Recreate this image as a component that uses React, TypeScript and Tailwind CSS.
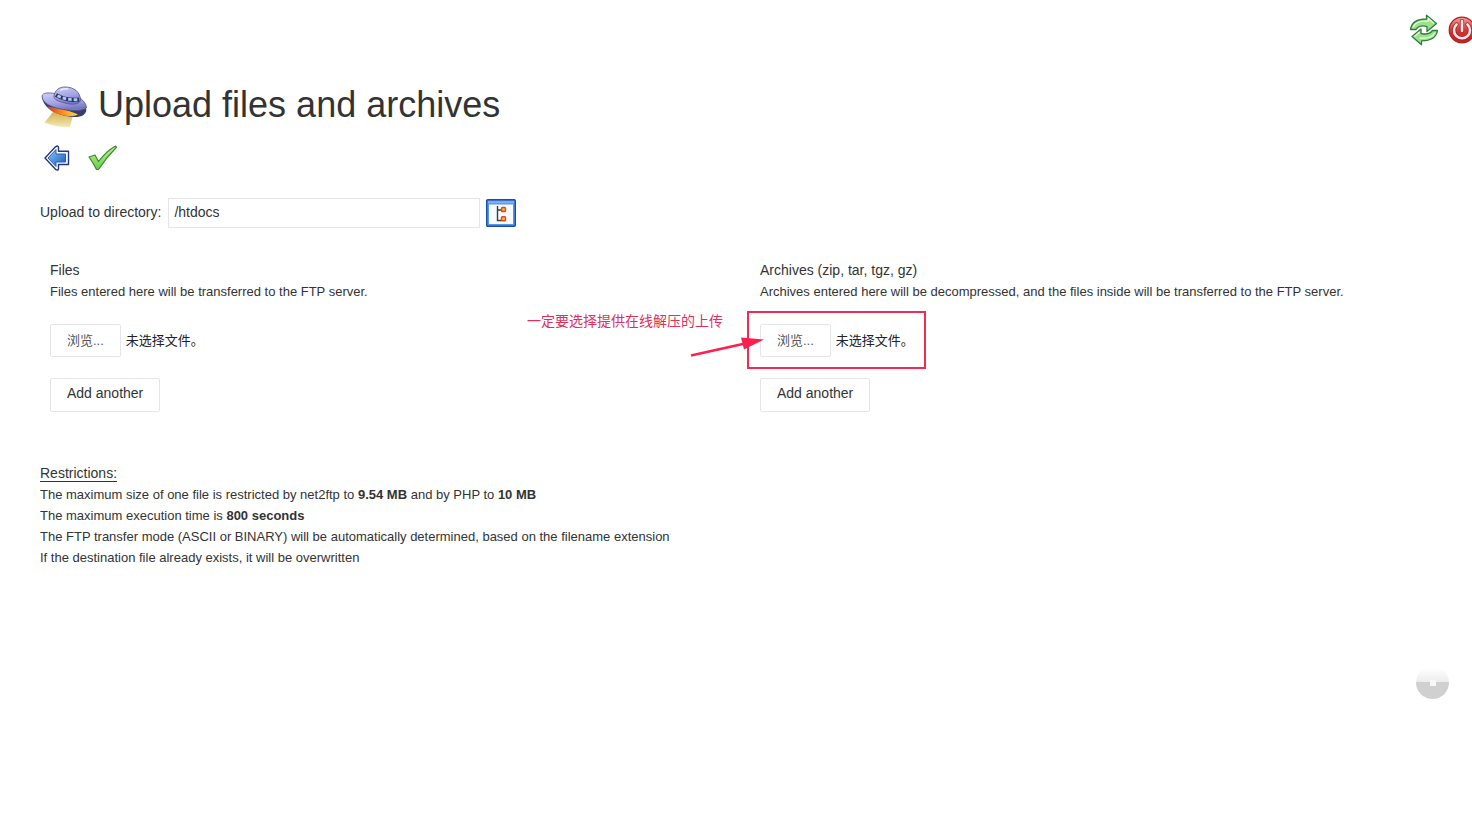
import { useId, useState } from "react";
import type { ReactNode } from "react";

type Section = { title: string; hint: string; marked?: boolean };

const SECTIONS: Section[] = [
  { title: "Files", hint: "Files entered here will be transferred to the FTP server." },
  {
    title: "Archives (zip, tar, tgz, gz)",
    hint: "Archives entered here will be decompressed, and the files inside will be transferred to the FTP server.",
    marked: true,
  },
];

function RefreshIcon() {
  return (
    <svg viewBox="0 0 32 32" className="size-8" aria-hidden="true">
      <g stroke="#2f7d3a" strokeWidth="1.3" strokeLinejoin="round" fill="#9be288">
        <path d="M2.500 15.500C3.500 8.500 8 5 18.500 5V1.200L28.500 9.500l-9.500 8V12.500C14 11 10.500 11.500 8 15.500z" />
        <path d="M29.500 16.500C28.500 23.500 24 26.800 13.500 26.800v4L4 22.500l9-7.500v4.500c5 1.200 8.500 1 11.500-3z" />
      </g>
      <g fill="none" stroke="#e2fbd8" strokeWidth="1.3">
        <path d="M5 13.500C7 8.500 11 7 20.500 7.200V4.500l5.500 5" />
        <path d="M27 18.500C25 23 21 24.500 11.500 24.200M6.500 22.500l5-4.500" />
      </g>
    </svg>
  );
}

function PowerIcon() {
  return (
    <svg viewBox="0 0 32 32" className="size-8" aria-hidden="true">
      <defs>
        <linearGradient id="power-red" x1="0" y1="0" x2="0" y2="1">
          <stop offset="0" stopColor="#f0a09c" />
          <stop offset="0.5" stopColor="#d63838" />
          <stop offset="1" stopColor="#c42024" />
        </linearGradient>
      </defs>
      <circle cx="16" cy="16" r="12.800" fill="url(#power-red)" stroke="#a82022" strokeWidth="1.2" />
      <g fill="none" strokeLinecap="round">
        <path d="M10.500 10.500a8 8 0 1 0 11 0M16 7v10" stroke="#b02022" strokeWidth="4.200" />
        <path d="M10.500 10.500a8 8 0 1 0 11 0M16 7v10" stroke="#fbeaea" strokeWidth="2.600" />
      </g>
    </svg>
  );
}

function UfoIcon() {
  return (
    <svg viewBox="0 0 48 44" className="h-11 w-12 shrink-0" aria-hidden="true">
      <defs>
        <linearGradient id="ufo-hull" x1="0" y1="0" x2="0.3" y2="1">
          <stop offset="0" stopColor="#cfcff6" />
          <stop offset="0.6" stopColor="#a4a4e6" />
          <stop offset="1" stopColor="#7878c0" />
        </linearGradient>
        <linearGradient id="ufo-beam" x1="0" y1="0" x2="0" y2="1">
          <stop offset="0" stopColor="#d4b04c" />
          <stop offset="1" stopColor="#f2e8b8" />
        </linearGradient>
        <linearGradient id="ufo-glow" x1="0" y1="0" x2="1" y2="0">
          <stop offset="0" stopColor="#b8402c" />
          <stop offset="0.5" stopColor="#ff8c1c" />
          <stop offset="1" stopColor="#ffd84a" />
        </linearGradient>
      </defs>
      <path d="M13 28L4.500 38.500q12 5 25.500 4.500L33 31z" fill="url(#ufo-beam)" />
      <path d="M2 12C2 19 8 26.500 20 30.500c9 3 19 3.500 23.500.5 3-2.500 3.500-5 2-8z" fill="#3c3c68" />
      <path d="M7 22.500c8 1 20 3 31 8-4 2.200-11 2-17 .2C14 29 10 26.500 7 22.500z" fill="url(#ufo-glow)" />
      <path
        d="M2 12C3 8.500 8 8.500 15 9.500l25 4.500c4 3 6.500 6.500 6.500 10-3 2.500-12 3.500-23 1.500C11 23.500 2 19 2 12z"
        fill="url(#ufo-hull)"
        stroke="#50508c"
        strokeWidth="0.8"
      />
      <path
        d="M14 12C15 6.500 18.500 3 25 3c9 0 15.500 5 15.500 13.500-1.500 4-8.500 4.500-15.500 2.500-6.500-1.600-11.500-3.500-11-7z"
        fill="url(#ufo-hull)"
        stroke="#50508c"
        strokeWidth="0.8"
      />
      <path d="M16 11c6 3.500 15 5.500 23 4.500" fill="none" stroke="#30305c" strokeWidth="4.200" />
      <path d="M17.500 11.800c6 3 13 4.200 20.500 3.900" fill="none" stroke="#a4ccff" strokeWidth="2.800" strokeDasharray="3.600 2" />
      <path d="M20 6.500c2-1.500 5-2 8-1.500" fill="none" stroke="#ececff" strokeWidth="1.500" />
    </svg>
  );
}

function BackIcon() {
  return (
    <svg viewBox="0 0 32 32" className="size-8" aria-hidden="true">
      <defs>
        <linearGradient id="back-blue" x1="0" y1="0" x2="1" y2="1">
          <stop offset="0" stopColor="#8cc8fa" />
          <stop offset="1" stopColor="#1458bc" />
        </linearGradient>
      </defs>
      <path
        d="M5 16L15.500 4.800q3-2 3 1V9.200H28.500v13.300H18.500v4q0 2.500-3 .8z"
        fill="#fff"
        stroke="#26387c"
        strokeWidth="1.400"
        strokeLinejoin="round"
      />
      <path
        d="M8 16l8-8.500V12h9.500v8H16v4.500z"
        fill="url(#back-blue)"
        stroke="#2460b4"
        strokeWidth="1"
        strokeLinejoin="round"
      />
    </svg>
  );
}

function CheckIcon() {
  return (
    <svg viewBox="0 0 32 32" className="size-8" aria-hidden="true">
      <defs>
        <linearGradient id="check-green" x1="0" y1="0" x2="0" y2="1">
          <stop offset="0" stopColor="#c4f598" />
          <stop offset="1" stopColor="#68cc44" />
        </linearGradient>
      </defs>
      <path
        d="M3 15l6-2 3.500 6.500Q20 9.500 29.500 4l1 1.200Q20.500 15 12.500 27.500H10.500Q7 20.500 3 15z"
        fill="url(#check-green)"
        stroke="#3c8a34"
        strokeWidth="1.200"
        strokeLinejoin="round"
      />
    </svg>
  );
}

function TreeIcon() {
  return (
    <svg viewBox="0 0 30 28" className="h-7 w-[30px]" aria-hidden="true">
      <rect x="0.700" y="0.700" width="28.600" height="26.600" rx="1" fill="#5a96e8" stroke="#1c4ba8" strokeWidth="1.400" />
      <path d="M2 3.200h26" stroke="#7db0f4" strokeWidth="2" />
      <path d="M3 5.500h24V25H3z" fill="#f6f9ff" />
      <path d="M11.500 7v14.500h4M11.500 11h4" fill="none" stroke="#3c3c3c" strokeWidth="1.400" />
      <g fill="#ffb03c" stroke="#dc4a1c" strokeWidth="1.400">
        <rect x="15.500" y="8.500" width="4" height="4" rx="0.800" />
        <rect x="15.500" y="17.800" width="4" height="4" rx="0.800" />
      </g>
    </svg>
  );
}

function IconButton({ label, children }: { label: string; children: ReactNode }) {
  return (
    <button type="button" aria-label={label} className="block shrink-0 cursor-pointer">
      {children}
    </button>
  );
}

function FileRow({ marked }: { marked?: boolean }) {
  const id = useId();
  const [name, setName] = useState("");

  return (
    <div className="relative mb-[21px] flex w-fit items-center text-[13px]">
      <input
        id={id}
        type="file"
        className="peer sr-only"
        onChange={(e) => setName(e.target.files?.[0]?.name ?? "")}
      />
      <label
        htmlFor={id}
        className="cursor-pointer rounded-xs border border-[#e5e5e5] px-4 py-[5px] text-[#555] peer-focus-visible:border-[#999]"
      >
        浏览...
      </label>
      <span className="ml-[5px] text-[#222]">{name || "未选择文件。"}</span>
      {marked && <Callout />}
    </div>
  );
}

// Red frame, arrow and note drawn over the archive picker
function Callout() {
  return (
    <div className="pointer-events-none absolute -top-[13px] -right-3 -bottom-3 -left-[13px] border-2 border-[#f02c54]">
      <p className="absolute -top-0.5 right-full mr-[26px] whitespace-nowrap text-[14px] text-[#e0305a]">
        一定要选择提供在线解压的上传
      </p>
      <svg viewBox="0 0 76 22" className="absolute top-6 -left-[59px] h-[22px] w-[76px]" aria-hidden="true">
        <path d="M1 18.500l54-12" stroke="#ff1f4f" strokeWidth="2.400" />
        <path d="M51 .500L74 2.500 54 12.500z" fill="#ff1f4f" />
      </svg>
    </div>
  );
}

function UploadSection({ title, hint, marked }: Section) {
  const [rows, setRows] = useState(1);

  return (
    <section className="p-2.5">
      <h2>{title}</h2>
      <p className="mb-[22px] text-[13px]">{hint}</p>
      {Array.from({ length: rows }, (_, i) => (
        <FileRow key={i} marked={marked && i === 0} />
      ))}
      <button
        type="button"
        onClick={() => setRows(rows + 1)}
        className="cursor-pointer rounded-xs border border-[#e5e5e5] px-4 pt-1 pb-[7px]"
      >
        Add another
      </button>
    </section>
  );
}

export default function App() {
  const [directory, setDirectory] = useState("/htdocs");

  return (
    <div className="relative min-h-screen overflow-x-hidden bg-white font-['Liberation_Sans','Noto_Sans_CJK_SC',sans-serif] text-[14px] leading-[21px] text-[#333]">
      <header className="-mr-1.5 flex justify-end gap-1.5 pt-3.5">
        <IconButton label="Refresh">
          <RefreshIcon />
        </IconButton>
        <IconButton label="Logout">
          <PowerIcon />
        </IconButton>
      </header>

      <form className="pt-9 pr-3 pl-10" onSubmit={(e) => e.preventDefault()}>
        <div className="flex items-end gap-2.5">
          <UfoIcon />
          <h1 className="text-[36px] leading-[46px]">Upload files and archives</h1>
        </div>

        <div className="mt-3.5 flex gap-3.5">
          <IconButton label="Back">
            <BackIcon />
          </IconButton>
          <IconButton label="Upload">
            <CheckIcon />
          </IconButton>
        </div>

        <div className="mt-6 flex items-center">
          <label htmlFor="directory" className="pb-0.5">
            Upload to directory:
          </label>
          <input
            id="directory"
            type="text"
            value={directory}
            onChange={(e) => setDirectory(e.target.value)}
            className="mr-1.5 ml-[7px] h-[30px] w-78 border border-[#e5e5e5] px-[5px] pb-0.5 outline-none focus:border-[#999]"
          />
          <IconButton label="Browse directories">
            <TreeIcon />
          </IconButton>
        </div>

        <div className="mt-[22px] grid grid-cols-2">
          {SECTIONS.map((s) => (
            <UploadSection key={s.title} {...s} />
          ))}
        </div>

        <div className="mt-[41px]">
          <h2 className="underline underline-offset-3">Restrictions:</h2>
          <div className="text-[13px]">
            <p>
              The maximum size of one file is restricted by net2ftp to <b>9.54 MB</b> and by PHP to <b>10 MB</b>
            </p>
            <p>
              The maximum execution time is <b>800 seconds</b>
            </p>
            <p>The FTP transfer mode (ASCII or BINARY) will be automatically determined, based on the filename extension</p>
            <p>If the destination file already exists, it will be overwritten</p>
          </div>
        </div>
      </form>

      <button
        type="button"
        aria-label="Back to top"
        className="fixed right-[23px] bottom-[123px] flex size-[33px] items-center justify-center rounded-full bg-linear-to-b from-white from-5% via-[#ececec] via-50% to-[#d0d0d0] to-50%"
      >
        <span className="size-1.5 bg-[#f8f8f8]" />
      </button>
    </div>
  );
}
